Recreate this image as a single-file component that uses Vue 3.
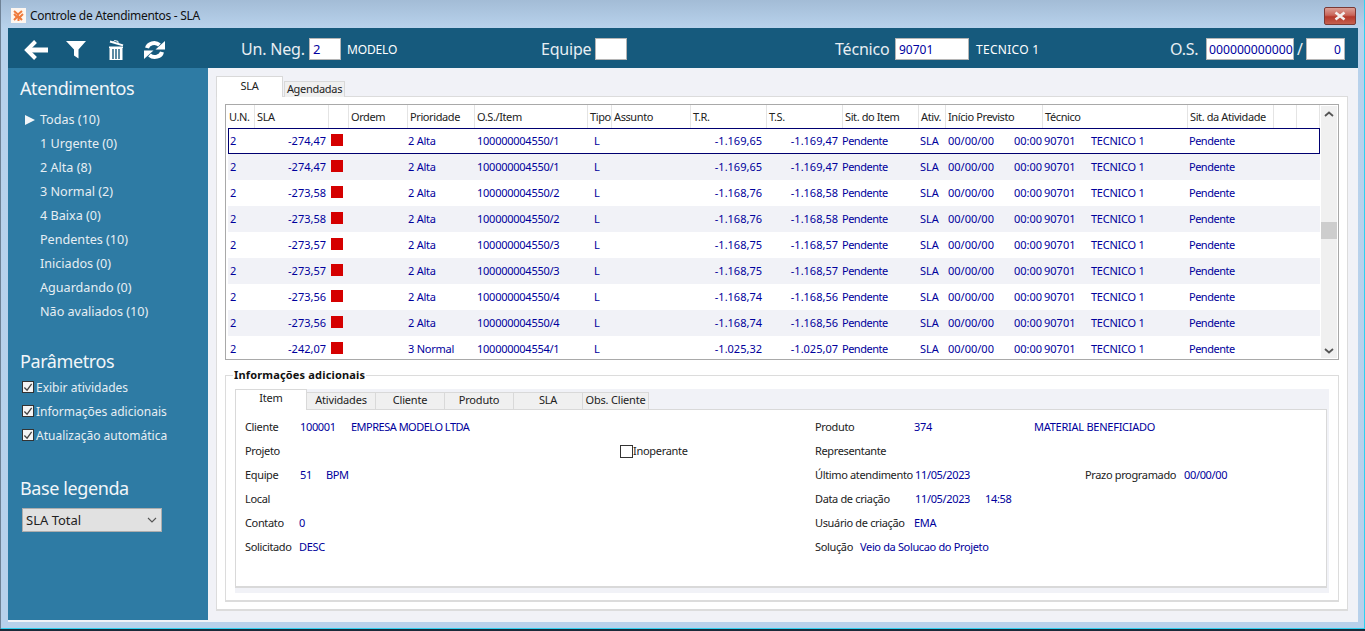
<script setup>
const sidebarItems = [
  'Todas (10)', '1 Urgente (0)', '2 Alta (8)', '3 Normal (2)', '4 Baixa (0)',
  'Pendentes (10)', 'Iniciados (0)', 'Aguardando (0)', 'Não avaliados (10)'
]
const params = ['Exibir atividades', 'Informações adicionais', 'Atualização automática']
const headers = ['U.N.', 'SLA', '', 'Ordem', 'Prioridade', 'O.S./Item', 'Tipo', 'Assunto', 'T.R.', 'T.S.', 'Sit. do Item', 'Ativ.', 'Início Previsto', 'Técnico', 'Sit. da Atividade', '', '']
const rows = [
  ['-274,47', '2 Alta', '100000004550/1', '-1.169,65', '-1.169,47'],
  ['-274,47', '2 Alta', '100000004550/1', '-1.169,65', '-1.169,47'],
  ['-273,58', '2 Alta', '100000004550/2', '-1.168,76', '-1.168,58'],
  ['-273,58', '2 Alta', '100000004550/2', '-1.168,76', '-1.168,58'],
  ['-273,57', '2 Alta', '100000004550/3', '-1.168,75', '-1.168,57'],
  ['-273,57', '2 Alta', '100000004550/3', '-1.168,75', '-1.168,57'],
  ['-273,56', '2 Alta', '100000004550/4', '-1.168,74', '-1.168,56'],
  ['-273,56', '2 Alta', '100000004550/4', '-1.168,74', '-1.168,56'],
  ['-242,07', '3 Normal', '100000004554/1', '-1.025,32', '-1.025,07']
]
const infoTabs = ['Atividades', 'Cliente', 'Produto', 'SLA', 'Obs. Cliente']
</script>

<template>
  <div class="window">
    <div class="titlebar">
      <svg class="appicon" viewBox="0 0 15 15">
        <rect width="15" height="15" fill="#fdf6f0" />
        <path d="M3 3 L7 6.5 L11 3 M3 6 L6 9 M12 6 L9 9 M3 12 L7 8 L11 12 M7.5 9 V13" stroke="#ee7a3c" stroke-width="2" fill="none" />
      </svg>
      <span class="title">Controle de Atendimentos - SLA</span>
      <div class="close">
        <svg viewBox="0 0 14 10" width="14" height="10">
          <path d="M2.5 1.5 L11.5 8.5 M11.5 1.5 L2.5 8.5" stroke="#f4f0ee" stroke-width="2.6" />
        </svg>
      </div>
    </div>

    <div class="client">
      <header class="topbar">
        <div class="tools">
          <svg class="tool t-back" viewBox="0 0 24 20" width="24" height="20">
            <path d="M11.5 1.5 L3 10 L11.5 18.5" stroke="#fff" stroke-width="4" fill="none" />
            <path d="M3 10 H24" stroke="#fff" stroke-width="5" />
          </svg>
          <svg class="tool t-filter" viewBox="0 0 20 18" width="20" height="18">
            <path d="M0 0 H20 L12.5 8.5 V17.5 L8 14.5 V8.5 Z" fill="#fff" />
          </svg>
          <svg class="tool t-trash" viewBox="0 0 16 20" width="16" height="20">
            <path d="M1 6.5 H15 V8 H14.5 V20 H1.5 V8 H1 Z" fill="#fff" />
            <path d="M5 9 V19 M8 9 V19 M11 9 V19" stroke="#165a7d" stroke-width="1.4" />
            <path d="M2 1.5 L15 5.4" stroke="#fff" stroke-width="2" />
            <path d="M5.5 2 L6.5 0.5 L10 1.4 L10 3" stroke="#fff" stroke-width="1" fill="none" />
          </svg>
          <svg class="tool t-sync" viewBox="0 0 21 20" width="21" height="20">
            <path d="M3 8 C4 3.5 11 1 15.5 5" stroke="#fff" stroke-width="4" fill="none" />
            <path d="M11.5 9.5 L21 9.5 L21 1 Z" fill="#fff" />
            <path d="M18 12 C17 16.5 10 19 5.5 15" stroke="#fff" stroke-width="4" fill="none" />
            <path d="M9.5 10.5 L0 10.5 L0 19 Z" fill="#fff" />
          </svg>
        </div>
        <div class="hgroup g-un">
          <label class="l-un">Un. Neg.</label><span class="field f-un">2</span><span class="hint">MODELO</span>
        </div>
        <div class="hgroup g-eq">
          <label class="l-eq">Equipe</label><span class="field f-eq"></span>
        </div>
        <div class="hgroup g-tec">
          <label class="l-tec">Técnico</label><span class="field f-tec">90701</span><span class="hint h-tec">TECNICO 1</span>
        </div>
        <div class="hgroup g-os">
          <label class="l-os">O.S.</label><span class="field f-os">000000000000</span><span class="slash">/</span><span class="field f-item">0</span>
        </div>
      </header>

      <div class="body">
        <aside class="sidebar">
          <h2 class="h-first">Atendimentos</h2>
          <ul class="menu">
            <li v-for="(item, i) in sidebarItems" :key="item">
              <span v-if="i === 0" class="caret"></span>{{ item }}
            </li>
          </ul>
          <h2 class="h-params">Parâmetros</h2>
          <ul class="checks">
            <li v-for="p in params" :key="p">
              <span class="sidecheck">
                <svg viewBox="0 0 11 11" width="11" height="11"><path d="M1.5 5.5 L4.5 8.5 L9.5 1.5" stroke="#444" stroke-width="1.4" fill="none" /></svg>
              </span>{{ p }}
            </li>
          </ul>
          <h2 class="h-base">Base legenda</h2>
          <div class="select">
            <span>SLA Total</span>
            <svg viewBox="0 0 10 6" width="10" height="6"><path d="M1 1 L5 5 L9 1" stroke="#555" stroke-width="1.1" fill="none" /></svg>
          </div>
        </aside>

        <main class="main">
          <div class="tabs">
            <div class="tab active">SLA</div>
            <div class="tab t-ag">Agendadas</div>
          </div>
          <section class="panel">
            <div class="gridbox">
              <div class="gridcontent">
                <div class="grow ghead">
                  <div v-for="(h, i) in headers" :key="i" class="hcell">{{ h }}</div>
                </div>
                <div class="gbody">
                  <div
                    v-for="(r, i) in rows"
                    :key="i"
                    class="grow drow"
                    :class="{ selected: i === 0, alt: i % 2 === 1 }"
                  >
                    <div class="c c-un">2</div>
                    <div class="c num n-sla">{{ r[0] }}</div>
                    <div class="c"><span class="flag"></span></div>
                    <div class="c"></div>
                    <div class="c c-txt">{{ r[1] }}</div>
                    <div class="c c-os">{{ r[2] }}</div>
                    <div class="c c-tipo">L</div>
                    <div class="c"></div>
                    <div class="c num n-tr">{{ r[3] }}</div>
                    <div class="c num n-ts">{{ r[4] }}</div>
                    <div class="c c-sit">Pendente</div>
                    <div class="c c-ativ">SLA</div>
                    <div class="c c-ini"><span>00/00/00</span><span>00:00</span></div>
                    <div class="c c-tec"><span>90701</span><span class="c-txt">TECNICO 1</span></div>
                    <div class="c c-sa">Pendente</div>
                    <div class="c"></div>
                    <div class="c"></div>
                  </div>
                </div>
              </div>
              <div class="scrollbar">
                <svg viewBox="0 0 10 6" width="10" height="6"><path d="M1 5 L5 1.5 L9 5" stroke="#555" stroke-width="1.8" fill="none" /></svg>
                <span class="thumb"></span>
                <svg viewBox="0 0 10 6" width="10" height="6"><path d="M1 1 L5 4.5 L9 1" stroke="#555" stroke-width="1.8" fill="none" /></svg>
              </div>
            </div>

            <fieldset class="group">
              <legend>Informações adicionais</legend>
              <div class="infowrap">
                <div class="itabs">
                  <div class="itab active">Item</div>
                  <div v-for="t in infoTabs" :key="t" class="itab">{{ t }}</div>
                </div>
                <div class="ipage">
                  <div class="irow">
                    <div class="ileft"><span class="lb w55">Cliente</span><span class="v w51">100001</span><span class="v v-tight">EMPRESA MODELO LTDA</span></div>
                    <div class="iright"><span class="lb w99">Produto</span><span class="v w120">374</span><span class="v v-wide">MATERIAL BENEFICIADO</span></div>
                  </div>
                  <div class="irow">
                    <div class="ileft"><span class="lb w375">Projeto</span><span class="inop"><i class="box"></i>Inoperante</span></div>
                    <div class="iright"><span class="lb">Representante</span></div>
                  </div>
                  <div class="irow">
                    <div class="ileft"><span class="lb w55">Equipe</span><span class="v w26">51</span><span class="v">BPM</span></div>
                    <div class="iright"><span class="lb w100">Último atendimento</span><span class="v w170">11/05/2023</span><span class="lb w99">Prazo programado</span><span class="v">00/00/00</span></div>
                  </div>
                  <div class="irow">
                    <div class="ileft"><span class="lb">Local</span></div>
                    <div class="iright"><span class="lb w100">Data de criação</span><span class="v w70">11/05/2023</span><span class="v">14:58</span></div>
                  </div>
                  <div class="irow">
                    <div class="ileft"><span class="lb w54">Contato</span><span class="v">0</span></div>
                    <div class="iright"><span class="lb w99">Usuário de criação</span><span class="v">EMA</span></div>
                  </div>
                  <div class="irow">
                    <div class="ileft"><span class="lb w54">Solicitado</span><span class="v">DESC</span></div>
                    <div class="iright"><span class="lb w45">Solução</span><span class="v">Veio da Solucao do Projeto</span></div>
                  </div>
                </div>
              </div>
            </fieldset>
          </section>
        </main>
      </div>
    </div>
  </div>
</template>

<style>
html, body { margin: 0; padding: 0; background: #b8d1eb; overflow: hidden; }
</style>

<style scoped>
* { box-sizing: border-box; }
.window {
  width: 1365px; height: 631px; font-family: "Noto Sans", sans-serif; font-size: 11px;
  color: #222; padding: 0 7px 7px 8px; display: flex; flex-direction: column;
  background: linear-gradient(#a3bcd6 0, #b8d2ec 28px, #b8d1eb 100%);
  border-bottom: 2px solid #1a2b3a; box-shadow: inset 1px 0 0 #6f8296, inset 0 -1px 0 #2fd0f0, inset -1px 0 0 #2fd0f0;
}
.titlebar { height: 28px; flex: none; display: flex; align-items: center; }
.appicon { width: 15px; height: 15px; margin: 2px 4px 0 3px; }
.title { font-size: 12px; color: #111; margin-top: 3px; letter-spacing: -0.3px; }
.close {
  margin-left: auto; margin-right: 2px; width: 32px; height: 18px; align-self: flex-start; margin-top: 7px;
  border: 1px solid #7a3a35; border-radius: 2px; display: flex; align-items: center; justify-content: center;
  background: linear-gradient(#dca096 0, #c9665a 45%, #b6392b 55%, #c4604f 100%);
}
.client { flex: 1; display: flex; flex-direction: column; min-height: 0; background: #f1f2f7; }
.topbar { height: 40px; flex: none; background: #165a7d; display: flex; align-items: center; color: #fff; padding-top: 2px; }
.tools { width: 233px; display: flex; align-items: center; flex: none; padding-left: 16px; margin-top: 1px; }
.t-back { margin-right: 18px; }
.t-filter { margin-right: 22px; }
.t-trash { margin-right: 20px; }
.hgroup { display: flex; align-items: center; flex: none; }
.hgroup label { font-size: 16px; color: #e8eef3; white-space: nowrap; letter-spacing: -0.2px; }
.l-un { width: 62px; } .l-eq { width: 49px; } .l-tec { width: 54px; } .l-os { width: 30px; }
.g-un { width: 300px; }
.g-eq { width: 294px; }
.g-tec { width: 335px; }
.field {
  height: 22px; background: #fff; border: 1px solid #b5b5b5; color: #0000a0; font-size: 12px;
  display: flex; align-items: center; padding: 0 3px; font-family: "Noto Sans", sans-serif;
}
.f-un { width: 32px; margin-left: 6px; font-size: 13px; }
.f-eq { width: 32px; margin-left: 5px; }
.f-tec { width: 74px; margin-left: 6px; }
.f-os { width: 88px; margin-left: 6px; padding: 0 2px; font-size: 12.2px; }
.f-item { width: 39px; margin-left: 3px; justify-content: flex-end; }
.hint { margin-left: 6px; font-size: 12px; letter-spacing: -0.15px; }
.h-tec { margin-left: 7px; letter-spacing: 0.3px; }
.slash { font-size: 16px; margin-left: 3px; color: #e8eef3; }
.body { flex: 1; display: flex; min-height: 0; }
.sidebar { width: 200px; flex: none; background: #2e7ba4; color: #e6eef3; padding-left: 12px; height: 552px; }
.sidebar h2 { margin: 0; font-weight: 400; font-size: 18px; line-height: 24px; color: #f2f6f9; letter-spacing: -0.4px; }
.h-first { padding-top: 8px; height: 32px; box-sizing: content-box; }
.menu { list-style: none; margin: 0; padding: 0 0 0 20px; position: relative; }
.menu li { height: 24px; line-height: 24px; font-size: 12.6px; white-space: nowrap; position: relative; }
.caret {
  position: absolute; left: -15px; top: 7px; width: 0; height: 0;
  border-left: 10px solid #f2f6f9; border-top: 5.5px solid transparent; border-bottom: 5.5px solid transparent;
}
.h-params { margin-top: 25px !important; }
.checks { list-style: none; margin: 2px 0 0; padding: 0 0 0 2px; }
.checks li { height: 24px; display: flex; align-items: center; font-size: 12px; white-space: nowrap; }
.sidecheck {
  width: 12px; height: 12px; background: #f4f4f4; border: 1px solid #333; margin-right: 2px;
  display: flex; align-items: center; justify-content: center;
}
.h-base { margin-top: 29px !important; }
.select {
  margin: 8px 0 0 2px; width: 140px; height: 24px; background: #e1e1e1; border: 1px solid #adadad;
  display: flex; align-items: center; justify-content: space-between; padding: 0 4px 0 3px; font-size: 13px; color: #222;
}
.main { flex: 1; min-width: 0; padding: 8px 0 0 8px; }
.tabs { display: flex; align-items: flex-end; height: 21px; position: relative; z-index: 1; letter-spacing: -0.3px; }
.tab { height: 16px; font-size: 11px; text-align: center; line-height: 13px; background: #f0f0f0; border: 1px solid #d9d9d9; border-bottom: none; }
.tab.active { width: 67px; height: 21px; background: #fff; line-height: 18px; border-bottom: none; }
.t-ag { width: 61px; margin-left: 1px; border-left: 1px solid #d9d9d9; }
.panel {
  width: 1132px; height: 515px; margin-top: -1px; background: #fff; border: 1px solid #dcdcdc; border-bottom-width: 2px;
  padding: 7px 8px 0 8px;
}
.gridbox { height: 256px; border: 1px solid #a9a9a9; display: flex; overflow: hidden; background: #fff; padding-left: 2px; }
.gridcontent { width: 1092px; flex: none; height: 100%; overflow: hidden; }
.grow {
  display: grid;
  grid-template-columns: 27px 74px 20px 59px 67px 113px 24px 79px 76px 76px 76px 27px 97px 145px 86px 23px 23px;
}
.ghead { height: 23px; color: #222; }
.hcell { border-right: 1px solid #e4e4e4; padding-left: 2px; line-height: 23px; white-space: nowrap; overflow: hidden; letter-spacing: -0.4px; }
.hcell:first-child { padding-left: 1px; }
.gbody { height: 232px; overflow: hidden; }
.drow { height: 26px; line-height: 26px; color: #00009c; background: #fff; }
.drow.alt { background: #f1f2f7; }
.drow.selected { box-shadow: inset 0 0 0 1px #000070; margin-bottom: 0; }
.c { white-space: nowrap; min-width: 0; }
.c-un { padding-left: 3px; margin-left: -1px; }
.c-txt { letter-spacing: -0.25px; }
.num { text-align: right; }
.n-sla { padding-right: 3px; }
.n-tr, .n-ts { padding-right: 5px; }
.flag { display: block; width: 12px; height: 12px; background: #d50000; margin: 6px 0 0 2px; }
.c-os { padding-left: 2px; letter-spacing: -0.25px; }
.c-tipo { padding-left: 6px; }
.c-sit { margin-left: -1px; letter-spacing: -0.5px; }
.c-ativ { padding-left: 1px; }
.c-ini { display: flex; justify-content: space-between; padding-left: 2px; padding-right: 1px; }
.c-tec { display: flex; padding-left: 1px; }
.c-tec span:first-child { width: 47px; }
.c-sa { padding-left: 1px; letter-spacing: -0.5px; }
.scrollbar {
  width: 16px; margin: 1px 0 0 1px; background: #f0f0f0; display: flex; flex-direction: column;
  align-items: center; justify-content: space-between; padding: 5px 0 4px; position: relative; height: 252px;
}
.thumb { position: absolute; left: 0; top: 116px; width: 16px; height: 17px; background: #cdcdcd; }
.group {
  margin: 8px 0 0 0; padding: 0 9px 0 9px; width: 1114px; height: 234px; border: 1px solid #dcdcdc; border-bottom-width: 2px; min-width: 0;
}
.group legend { font-weight: 700; font-size: 11px; padding: 0 1px; margin-left: -2px; line-height: 14px; color: #111; letter-spacing: 0.17px; }
.infowrap { background: #f1f2f7; width: 1094px; height: 204px; margin-top: 7px; }
.itabs { display: flex; align-items: flex-end; height: 21px; letter-spacing: -0.2px; }
.itab { width: 69px; height: 18px; text-align: center; line-height: 14px; background: #f0f0f0; border: 1px solid #d9d9d9; border-left: none; border-bottom: 1px solid #d9d9d9; }
.itab:last-child { width: 66px; }
.itab.active { width: 72px; height: 21px; background: #fff; border: 1px solid #d9d9d9; border-bottom: none; line-height: 16px; }
.ipage { width: 1092px; height: 179px; margin-top: -1px; background: #fff; border: 1px solid #d9d9d9; border-top: 1px solid #d9d9d9; border-bottom-width: 2px; padding: 5px 0 0 9px; }
.irow { display: flex; height: 24px; line-height: 24px; }
.ileft { width: 570px; display: flex; flex: none; }
.iright { display: flex; }
.lb { color: #222; white-space: nowrap; display: block; flex: none; letter-spacing: -0.35px; }
.v { color: #00009c; white-space: nowrap; display: block; flex: none; letter-spacing: -0.35px; }
.v-tight { letter-spacing: -0.5px; }
.v-wide { letter-spacing: -0.25px; }
.w26 { width: 26px; } .w45 { width: 45px; } .w51 { width: 51px; } .w54 { width: 54px; } .w55 { width: 55px; }
.w70 { width: 70px; } .w99 { width: 99px; } .w100 { width: 100px; } .w120 { width: 120px; } .w170 { width: 170px; } .w375 { width: 375px; }
.inop { display: flex; align-items: center; color: #222; letter-spacing: -0.3px; }
.box { width: 13px; height: 13px; border: 1px solid #333; background: #fff; margin-right: 0; }
</style>
